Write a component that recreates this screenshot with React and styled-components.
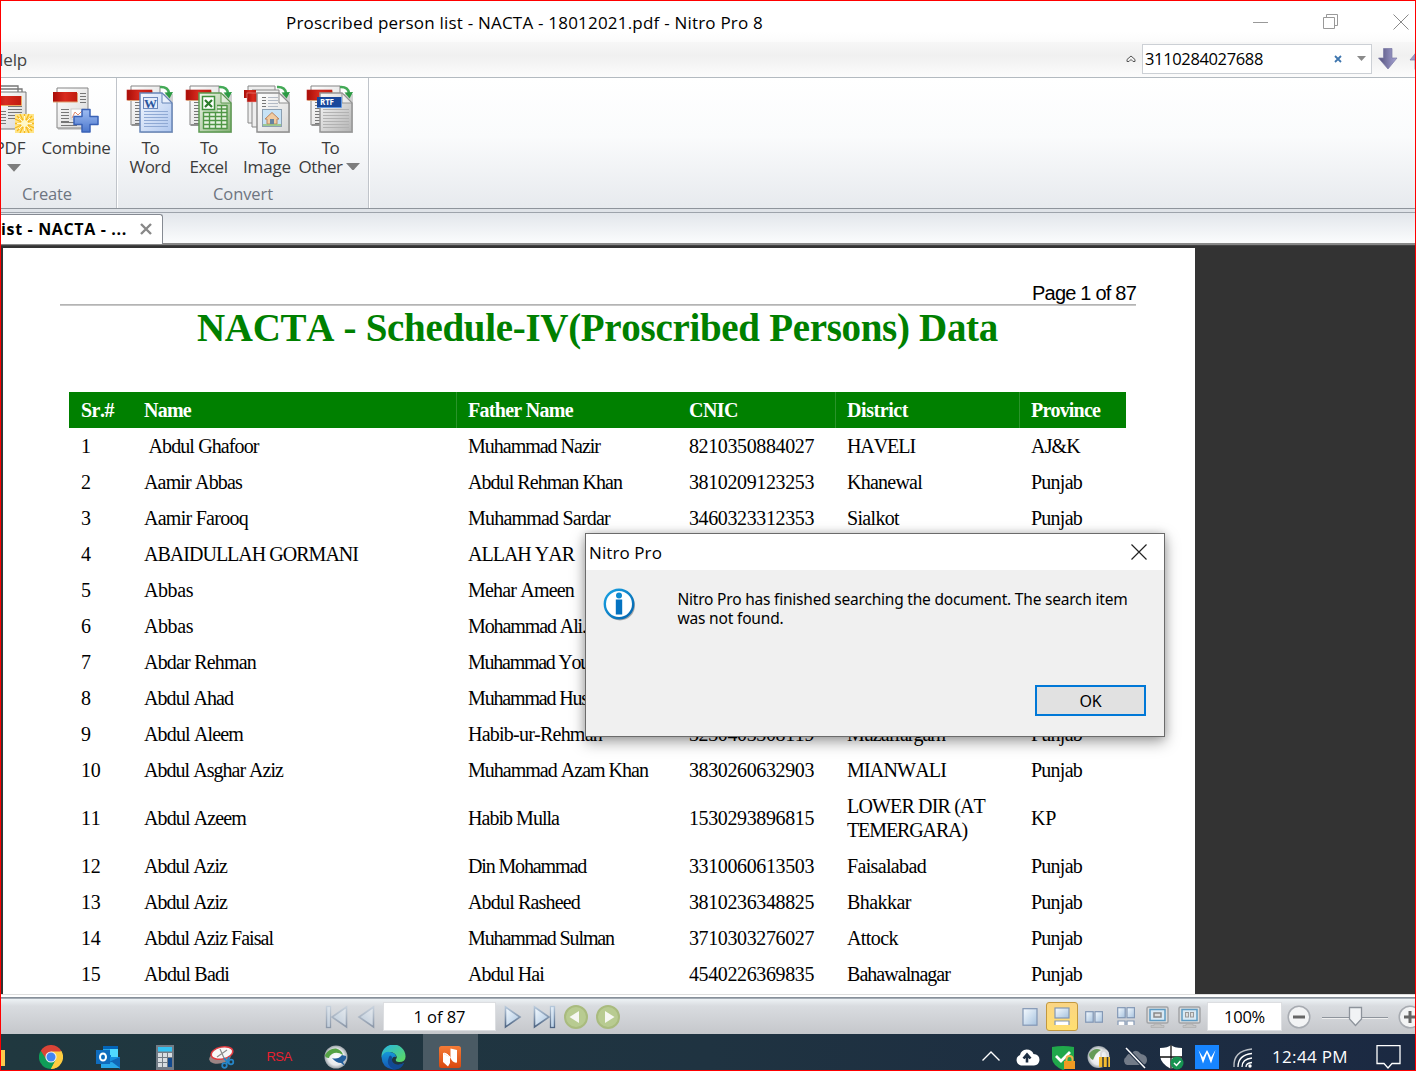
import React, { useLayoutEffect, useRef } from 'react';
import styled, { createGlobalStyle, css } from 'styled-components';

const Global = createGlobalStyle`
  * { box-sizing: border-box; }
  body { margin: 0; overflow: hidden; background: #fff; }
`;
const ui = css`font-family: "Open Sans", "Noto Sans", sans-serif;`;

const FitText = styled.span`
  display: inline-block;
  white-space: pre;
  flex: none;
`;
/* Tunes the tracking so that a line of text takes exactly w pixels. */
function Fit({ w, children, className }) {
  const ref = useRef(null);
  useLayoutEffect(() => {
    const el = ref.current;
    el.style.letterSpacing = '0px';
    const natural = el.getBoundingClientRect().width;
    el.style.letterSpacing = `${(w - natural) / String(children).length}px`;
  }, [w, children]);
  return <FitText ref={ref} className={className}>{children}</FitText>;
}

const Frame = styled.div`
  width: 1416px; height: 1071px;
  border: 1px solid #f00;
  display: flex; flex-direction: column;
  overflow: hidden;
  position: relative;
  color: #000;
  ${ui}
`;

/* ---------- title and menu ---------- */
const TitleBar = styled.header`
  height: 41px; flex: none; padding-top: 1px;
  display: flex; align-items: center; justify-content: space-between;
  padding-left: 285px; font-size: 17px;
  background: linear-gradient(#fff 75%, #fbfbfb);
`;
const WindowButtons = styled.div`display: flex; gap: 54px; margin-right: 6px; svg { display: block; }`;
const MenuBar = styled.div`
  height: 36px; flex: none;
  display: flex; align-items: center; justify-content: space-between;
  background: linear-gradient(#f7f7f7, #f0f0f0 40%, #fcfcfc);
  border-bottom: 1px solid #b3bac0;
`;
const MenuItem = styled.div`margin-left: -10px; font-size: 17px; color: #444; line-height: 34px; padding-top: 1px;`;
const SearchArea = styled.div`display: flex; align-items: center; margin-right: -14px; padding-bottom: 2px;`;
const SearchBox = styled.div`
  width: 230px; height: 30px; margin: 0 6px 0 6px; padding: 0 5px 0 2px;
  border: 1px solid #ccd0d5; background: #fff;
  display: flex; align-items: center; font-size: 16.5px;
`;
const Grow = styled.div`flex: ${p => (p.$w ? `0 0 ${p.$w}px` : 1)}; overflow: hidden;`;

/* ---------- ribbon ---------- */
const Ribbon = styled.div`
  height: 131px; flex: none; display: flex;
  background: linear-gradient(#fff, #fafbfc 45%, #e7eaee);
  border-bottom: 1px solid #8e949b;
`;
const RibbonGroup = styled.section`
  width: ${p => p.$w}px; padding-top: 7px;
  display: flex; flex-direction: column;
  border-right: 1px solid #c0c4ca; box-shadow: 1px 0 #fff;
  overflow: hidden;
`;
const Tools = styled.div`display: flex; height: 98px; margin-left: ${p => p.$shift}px;`;
const Tool = styled.div`
  width: ${p => p.$w}px; margin-right: ${p => p.$gap || 0}px; flex: none;
  display: flex; flex-direction: column; align-items: center;
  font-size: 17px; line-height: 19px; color: #3b3b3b;
  svg.pic { display: block; margin-bottom: 5px; flex: none; }
`;
const LabelLine = styled.div`display: flex; align-items: center; height: 19px; gap: 3px; margin-left: ${p => p.$x || 0}px; padding-top: ${p => p.$y || 0}px;`;
const GroupLabel = styled.div`
  font-size: 16.5px; color: #6e7580; line-height: 22px;
  padding-left: ${p => p.$x}px;
`;

/* ---------- tabs ---------- */
const TabStrip = styled.div`
  height: 36px; flex: none; padding-top: 4px;
  background: linear-gradient(#dfe3e8 0 3px, #9da3ab 3px 4px, #e2e6eb 4px, #fbfcfd 34px, #888 34px);
`;
const DocTab = styled.div`
  width: 162px; height: 30px; padding: 0 9px 0 0; margin-top: 1px;
  background: #fff; border: 1px solid #858a92; border-left: 0; border-bottom: 0;
  border-radius: 0 3px 0 0;
  display: flex; align-items: center; justify-content: space-between;
  font-weight: 700; font-size: 16px;
  span { margin-top: -2px; } svg { margin-top: -1px; }
`;

/* ---------- document ---------- */
const Viewer = styled.main`
  height: 749px; flex: none; background: #333; padding: 2px 0 0 2px;
  border-top: 1px solid #444;
  overflow: hidden;
`;
const Page = styled.article`
  width: 1192px; height: 746px; background: #fff; overflow: hidden;
  font-family: "Liberation Serif", "Times New Roman", serif;
  font-kerning: none;
`;
const PageHead = styled.div`
  height: 57px; margin: 0 59px 0 57px; border-bottom: 1px solid #b4b4b4; box-shadow: 0 1px #c8c8c8;
  display: flex; justify-content: flex-end; align-items: flex-end;
  font: 20px/21px "Liberation Sans", Arial, sans-serif;
`;
const DocTitle = styled.h1`
  margin: 0 0 0 194px; height: 87px;
  font-size: 39px; line-height: 46px; color: #008000;
`;
const Table = styled.div`margin-left: 66px; width: 1057px; font-size: 20px;`;
const Row = styled.div`
  display: grid; grid-template-columns: 63px 324px 221px 158px 184px 107px;
  height: ${p => (p.$tall ? 60 : 36)}px; align-items: center;
  ${p => p.$head && css`background: #008000; color: #fff; font-weight: 700;`}
`;
const Cell = styled.div`
  padding-left: 12px; line-height: 24px; height: ${p => (p.$full ? '36px' : 'auto')};
  ${p => p.$full && css`line-height: 36px;`}
  ${p => p.$rule && css`border-left: 1px solid #2a932a; padding-left: 11px;`}
  ${p => p.$indent && css`padding-left: 16.5px;`}
  white-space: nowrap;
  span { display: block; width: max-content; }
`;

/* ---------- status bar ---------- */
const StatusBar = styled.footer`
  height: 40px; flex: none; padding-top: 5px;
  background: linear-gradient(#dedede 0 1px, #fff 1px 3px, #868f99 3px 4px, #a4acb5 4px 5px, #edf2f5 5px, #d9dce0 12px, #c5c7cb);
  display: flex; align-items: center;
  svg { display: block; flex: none; }
`;
const StatusField = styled.div`
  width: ${p => p.$w}px; height: 29px; background: #fff; border: 1px solid #dcdee1;
  display: flex; align-items: center; justify-content: center; font-size: 16.5px;
  margin: 0 ${p => p.$r}px 0 ${p => p.$l}px;
`;
const ViewMode = styled.div`
  width: 32px; height: 29px; display: flex; align-items: center; justify-content: center;
  ${p => p.$on && css`background: linear-gradient(#fbd584, #ffdf70); border: 1px solid #c2983e; border-radius: 3px;`}
`;
const Slider = styled.svg`margin: 0 10px 0 11px;`;

/* ---------- task bar ---------- */
const TaskBar = styled.nav`
  height: 36px; flex: none; display: flex; padding-top: 11px;
  background: linear-gradient(90deg, #20383f, #1f3341 50%, #1b2942);
  color: #fff; overflow: hidden;
  svg { display: block; flex: none; }
`;
const Folder = styled.div`width: 4px; height: 16px; margin: 5px 17.5px 0 0; background: #ffca4b;`;
const App57 = styled.div`
  width: 57px; height: 26px; display: flex; justify-content: center; align-items: flex-start;
  ${p => p.$on && css`background: #4a5a64; margin-top: -11px; padding-top: 11px; height: 36px; width: 55px; margin-left: 1px;`}
`;
const Rsa = styled.div`color: #e8202f; font: 13px/24px "Liberation Sans", Arial, sans-serif;`;
const Tray = styled.div`display: flex; margin-left: auto; padding-right: 14px;`;
const TrayCell = styled.div`width: 36px; display: flex; justify-content: center;`;
const Clock = styled.div`width: 77px; margin: 0 27px 0 11px; font-size: 17px; line-height: 24px;`;

/* ---------- dialog ---------- */
const Dialog = styled.div`
  position: absolute; left: 584px; top: 532px; width: 580px; height: 204px;
  border: 1px solid #6b6b6b; background: #f0f0f0;
  box-shadow: 0 5px 14px rgba(0,0,0,.36), 0 0 8px rgba(0,0,0,.16);
  display: flex; flex-direction: column;
`;
const DialogTitle = styled.div`
  height: 36px; background: #fff; padding: 0 17px 0 3px;
  display: flex; align-items: center; justify-content: space-between; font-size: 17px;
`;
const DialogBody = styled.div`display: flex; padding: 18px 0 0 17px; height: 115px;`;
const Message = styled.div`
  margin: 2px 0 0 40.500px; font: 15.5px/19px "Noto Sans", "Open Sans", sans-serif;
  display: flex; flex-direction: column; align-items: flex-start;
`;
const OkButton = styled.button`
  width: 111px; height: 31px; margin: 0 18px 0 auto; padding: 0;
  border: 2px solid #0078d7; background: #e1e1e1; color: #000;
  font: 16px "Noto Sans", sans-serif;
`;

/* ---------- drawings ---------- */
const Lines = ({ x, y, w, n, c = '#777', step = 3, h = 1 }) =>
  Array.from({ length: n }, (_, i) => <rect key={i} x={x} y={y + i * step} width={w} height={h} fill={c} />);

const DefsSvg = styled.svg`position: absolute;`;
const Defs = () => (
  <DefsSvg width="0" height="0">
    <defs>
      <linearGradient id="red" x2="1"><stop stopColor="#a80d08" /><stop offset=".5" stopColor="#d92a1e" /><stop offset="1" stopColor="#c01c10" /></linearGradient>
      <linearGradient id="paper" x2="1" y2="1"><stop stopColor="#fff" /><stop offset="1" stopColor="#d8d8d8" /></linearGradient>
      <linearGradient id="bluePaper" x2="1" y2="1"><stop stopColor="#f5f9ff" /><stop offset="1" stopColor="#aec6ee" /></linearGradient>
      <linearGradient id="greenPaper" x2="1" y2="1"><stop stopColor="#f2f8ec" /><stop offset="1" stopColor="#86b078" /></linearGradient>
      <linearGradient id="greyPaper" x2="1" y2="1"><stop stopColor="#fafafa" /><stop offset="1" stopColor="#b4b4b4" /></linearGradient>
      <linearGradient id="plus" x2="0" y2="1"><stop stopColor="#9fbdf3" /><stop offset="1" stopColor="#4c77cc" /></linearGradient>
      <linearGradient id="glass" x2="1" y2="1"><stop stopColor="#f6fbff" /><stop offset="1" stopColor="#a6c2de" /></linearGradient>
      <linearGradient id="edge" x2="0" y2="1"><stop stopColor="#b5c7da" /><stop offset="1" stopColor="#4f6583" /></linearGradient>
      <linearGradient id="arrow" x2="1"><stop stopColor="#55537d" /><stop offset="1" stopColor="#a7a4d5" /></linearGradient>
      <linearGradient id="info" x2="1" y2="1"><stop stopColor="#19a3e4" /><stop offset="1" stopColor="#0463ad" /></linearGradient>
      <linearGradient id="edgeA" x2="1" y2="1"><stop stopColor="#26b4e8" /><stop offset="1" stopColor="#5fdc58" /></linearGradient>
      <linearGradient id="edgeB" x2="0" y2="1"><stop stopColor="#1598d8" /><stop offset="1" stopColor="#1554b3" /></linearGradient>
      <radialGradient id="ball"><stop stopColor="#fff" /><stop offset=".7" stopColor="#e8eaec" /><stop offset="1" stopColor="#9ca4aa" /></radialGradient>
      <linearGradient id="nitro" x2="0" y2="1"><stop stopColor="#f47b36" /><stop offset="1" stopColor="#d9480f" /></linearGradient>
    </defs>
  </DefsSvg>
);

const PdfSheet = () => (
  <g>
    <path d="M5 1H34V40H5Z" fill="url(#paper)" stroke="#858585" />
    <rect x="6" y="39" width="30" height="2" fill="#777" opacity=".6" />
    <Lines x={9} y={17} w={8} n={8} />
    <rect x="1" y="5" width="25" height="10" fill="url(#red)" stroke="#b92018" strokeWidth=".6" />
    <path d="M1.500 15.500H26.500V6" fill="none" stroke="#dca27c" />
  </g>
);
const ConvertArrow = () => (
  <g><path d="M34 2Q42 1.500 43 8" fill="none" stroke="#43a956" strokeWidth="2.600" /><path d="M38.500 7.500L47 7L43.500 13.500Z" fill="#2b9a43" /></g>
);
const FrontSheet = ({ fill, stroke }) => (
  <g>
    <rect x="15" y="9" width="32" height="39" fill="#000" opacity=".18" />
    <path d="M14 8H36L46 18V47H14Z" fill={`url(#${fill})`} stroke={stroke} strokeWidth="1.500" />
    <path d="M36 8V18H46Z" fill="#fff" fillOpacity=".5" stroke={stroke} />
  </g>
);
const Pic = ({ children }) => <svg className="pic" width="48" height="48" viewBox="0 0 48 48">{children}</svg>;

const PdfPic = () => (
  <Pic>
    <path d="M4 1H32V32M8 4H36V36" fill="none" stroke="#777" strokeWidth="1.300" />
    <path d="M6 7H40V44H6Z" fill="url(#paper)" stroke="#777" />
    <Lines x={22} y={12} w={14} n={8} /><Lines x={14} y={26} w={6} n={5} />
    <rect x="4" y="11" width="31" height="9" fill="url(#red)" /><path d="M4 20.500H35.500V11" fill="none" stroke="#eaa85e" />
    <rect x="29" y="29" width="19" height="19" fill="#ffe58a" />
    <path d="M38.500 29V48M29 38.500H48M31 31L46 46M46 31L31 46M34 29L43 48M43 29L34 48M29 34L48 43M48 34L29 43" stroke="#f6b91c" strokeWidth="1.300" />
    <path d="M38.500 31V46M31 38.500H46M33 33L44 44M44 33L33 44" stroke="#fffbe0" strokeWidth="1" />
    <circle cx="38.500" cy="38.500" r="3.500" fill="#fff9c8" />
  </Pic>
);
const CombinePic = () => (
  <Pic>
    <path d="M5 3H36V43H5Z" fill="url(#paper)" stroke="#858585" />
    <path d="M6 44H36" stroke="#777" opacity=".6" />
    <Lines x={9} y={24} w={8} n={5} /><Lines x={9} y={37} w={16} n={2} /><Lines x={28} y={8} w={6} n={4} />
    <rect x="19" y="24" width="14" height="10" fill="#fff" stroke="#ccc" /><path d="M20 33L23 27L26 30L30 26" fill="none" stroke="#e28b6f" />
    <rect x="1" y="7" width="24" height="10" fill="url(#red)" /><path d="M1 17H25.500V8" fill="none" stroke="#e0a273" />
    <path d="M30 24.500H38V31.500H46V39.500H38V47H30V39.500H22V31.500H30Z" fill="url(#plus)" stroke="#3a62b6" strokeWidth="1.500" strokeLinejoin="round" />
  </Pic>
);
const SmallText = styled.text`font: 700 ${p => p.$s}px "Liberation Serif", serif;`;
const SansText = styled.text`font: 700 ${p => p.$s}px "Open Sans", sans-serif;`;
const WordPic = () => (
  <Pic>
    <PdfSheet /><FrontSheet fill="bluePaper" stroke="#6785b8" />
    <Lines x={18} y={26} w={24} n={6} c="#8fa9d4" />
    <rect x="17.500" y="12.500" width="14" height="11" fill="#e5edfa" stroke="#6c88bb" />
    <SmallText $s={13} x="18" y="22.500" fill="#2b569f">W</SmallText><ConvertArrow />
  </Pic>
);
const ExcelPic = () => (
  <Pic>
    <PdfSheet /><FrontSheet fill="greenPaper" stroke="#5c9a50" />
    <rect x="18" y="27" width="24" height="16" fill="#e8f3e2" /><rect x="33" y="20" width="9" height="8" fill="#e8f3e2" />
    <path d="M18 27.500H42M18 31.500H42M18 35.500H42M18 39.500H42M18 43.500H42M18.500 27V44M24.500 27V44M30.500 27V44M36.500 20V44M42 20V44M32 20.500H42M32 24H42" stroke="#4f9645" strokeWidth="1.400" />
    <rect x="17.500" y="11.500" width="12" height="13" fill="#fff" stroke="#3e913b" strokeWidth="1.500" />
    <path d="M20 15L27 22M27 15L20 22" stroke="#2c7b2b" strokeWidth="2.200" /><ConvertArrow />
  </Pic>
);
const ImagePic = () => (
  <Pic>
    <path d="M5 1H32V38H5Z" fill="#eee" stroke="#888" /><path d="M9 5H36V42H9Z" fill="#eee" stroke="#888" />
    <rect x="1" y="5" width="12" height="8" fill="url(#red)" /><rect x="4" y="8" width="12" height="9" fill="url(#red)" stroke="#eaa" strokeWidth=".5" />
    <FrontSheet fill="paper" stroke="#909090" />
    <Lines x={19} y={12} w={4} n={4} /><Lines x={25} y={12} w={10} n={4} c="#b3bac5" />
    <rect x="19.500" y="24.500" width="19" height="17" fill="#c6e2f6" stroke="#8b9fb2" />
    <path d="M22 34L29 27.500L36 34H34V39H24V34Z" fill="#f1cba0" stroke="#b98560" /><rect x="27" y="34" width="4" height="5" fill="#6683a0" />
    <path d="M20 40H38" stroke="#8fbf70" strokeWidth="1.500" /><ConvertArrow />
  </Pic>
);
const OtherPic = () => (
  <Pic>
    <PdfSheet /><FrontSheet fill="greyPaper" stroke="#959595" />
    <Lines x={17} y={24} w={26} n={7} c="#b2b2b2" />
    <rect x="11" y="12" width="24" height="10" fill="#17479b" /><path d="M11 22.500H35.500V12" fill="none" stroke="#6299e3" />
    <SansText $s={8} x="14" y="20" fill="#fff" textLength="14">RTF</SansText><ConvertArrow />
  </Pic>
);
const Drop = ({ w = 14, c = '#7d7d7d' }) => <svg width={w} height={w * 0.55} viewBox="0 0 14 8" preserveAspectRatio="none"><path d="M0 0H14L7 8Z" fill={c} /></svg>;

const SearchArrow = ({ up }) => (
  <svg width="20" height="22" viewBox="0 0 20 22"><path transform={up ? 'rotate(180 10 11)' : undefined} d="M5.500 .5H14V10H19L10 21L.5 10H5.500Z" fill="url(#arrow)" stroke="#7a78a4" strokeWidth=".7" /></svg>
);
const ClearMark = styled.svg`margin-right: 15px;`;

const Step = ({ bar, flip, w, dim }) => (
  <svg width={w} height="24" viewBox={`0 0 ${w} 24`} opacity={dim ? 0.5 : 1}>
    <g transform={flip ? `translate(${w} 0) scale(-1 1)` : undefined}>
      <path d="M1.500 2L16 12L1.500 22Z" fill="url(#glass)" stroke="url(#edge)" strokeWidth="1.600" />
      {bar && <rect x="17.500" y="1.500" width="4" height="21" fill="url(#glass)" stroke="url(#edge)" strokeWidth="1.300" />}
    </g>
  </svg>
);
const RoundStep = ({ flip }) => (
  <svg width="24" height="24" viewBox="0 0 24 24">
    <circle cx="12" cy="12" r="11" fill="#b8cb91" stroke="#a9bb7e" strokeWidth="2" />
    <path transform={flip ? 'translate(24 0) scale(-1 1)' : undefined} d="M9 6L18.500 12L9 18Z" fill="#f6f7f2" />
  </svg>
);
const MiniPage = ({ x, y, w, h }) => <rect x={x} y={y} width={w} height={h} fill="url(#glass)" stroke="#8297b4" strokeWidth="1.200" />;
const Monitor = ({ two }) => (
  <svg width="24" height="24" viewBox="0 0 24 24">
    <rect x="1" y="2" width="21" height="16" rx="1.500" fill="#ddd" stroke="#a2a4a7" strokeWidth="1.500" />
    <rect x="4" y="4.500" width="15" height="11" fill="#d9e9f4" stroke="#5e9cc4" strokeWidth="1.500" />
    {two ? <g fill="#ddd" stroke="#999"><rect x="7.500" y="7.500" width="3" height="4.500" /><rect x="12.500" y="7.500" width="3" height="4.500" /></g>
      : <rect x="8" y="8" width="7" height="4" fill="#ddd" stroke="#888" strokeWidth="1.500" />}
    <path d="M8 19H15V20.500H18V22.500H5V20.500H8Z" fill="#c4c4c4" stroke="#a8a8a8" strokeWidth=".6" />
  </svg>
);
const ZoomKnob = ({ plus }) => (
  <svg width="24" height="24" viewBox="0 0 24 24">
    <circle cx="12" cy="12" r="10.800" fill="#f3f4f5" stroke="#a7abb1" strokeWidth="1.500" />
    <path d={plus ? 'M6 12H18M12 6V18' : 'M6 12H18'} stroke="#666" strokeWidth="3" />
  </svg>
);

const Chrome = () => (
  <svg width="24" height="24" viewBox="0 0 24 24">
    <path d="M12 12L1.600 6A12 12 0 0 1 22.400 6Z" fill="#db4437" /><path d="M12 12L22.400 6A12 12 0 0 1 12 24Z" fill="#ffcd40" /><path d="M12 12V24A12 12 0 0 1 1.600 6Z" fill="#0f9d58" />
    <path d="M12 6.500H22.500L17 15Z" fill="#ffcd40" /><path d="M12 6.500A5.500 5.500 0 0 0 7 14L2 6Z" fill="#db4437" /><path d="M7 14.500L12 24L17 14.500Z" fill="#0f9d58" /><path d="M17 14.500L12 24Q20 23 22 17Z" fill="#ffcd40" />
    <circle cx="12" cy="12" r="5.600" fill="#f1f1f1" /><circle cx="12" cy="12" r="4.500" fill="#4285f4" />
  </svg>
);
const Outlook = () => (
  <svg width="26" height="25" viewBox="0 0 26 25">
    <rect x="8" y="1" width="15" height="17" fill="#28a8ea" /><rect x="8" y="1" width="15" height="3" fill="#0364b8" /><rect x="15" y="4" width="8" height="8" fill="#50d9ff" /><rect x="8" y="10" width="8" height="8" fill="#0078d4" />
    <path d="M6 12L25 12V23H6Z" fill="#1490df" /><path d="M25 12V24L14 17Z" fill="#1066b5" /><path d="M6 19L17 17L25 23H6Z" fill="#28a8ea" />
    <rect x="1" y="5" width="14" height="14" fill="#0f6cbd" /><ellipse cx="8" cy="12" rx="3" ry="3.500" fill="none" stroke="#fff" strokeWidth="2" />
  </svg>
);
const Calculator = () => (
  <svg width="18" height="25" viewBox="0 0 18 25">
    <rect width="18" height="25" fill="#727c86" /><rect x="2" y="2" width="14" height="4.500" fill="#35c1f1" />
    {[8, 13, 18].map(y => [2, 7, 12].map(x => <rect key={`${x}-${y}`} x={x} y={y} width="4" height="4" fill="#d8dde1" />))}
    <rect x="12" y="13" width="4" height="9" fill="#124a8f" />
  </svg>
);
const Snip = () => (
  <svg width="26" height="25" viewBox="0 0 26 25">
    <ellipse cx="11" cy="12.500" rx="11" ry="6" transform="rotate(-12 11 12.500)" fill="#9c8585" />
    <ellipse cx="13" cy="8" rx="11" ry="6" transform="rotate(-12 13 8)" fill="#f8f8f8" stroke="#e23b40" strokeWidth="1.500" />
    <path d="M8 12L18 5M11 4L15 13" stroke="#8b8b8b" strokeWidth="1.200" /><path d="M15 13L20 19M20 12L17 19" stroke="#2686c8" strokeWidth="1.800" />
    <circle cx="15.500" cy="20.500" r="2.300" fill="none" stroke="#2686c8" strokeWidth="1.700" /><circle cx="22" cy="17" r="2.300" fill="none" stroke="#2686c8" strokeWidth="1.700" />
  </svg>
);
const Globe = () => (
  <svg width="24" height="24" viewBox="0 0 24 24">
    <circle cx="12" cy="12" r="11.500" fill="url(#ball)" />
    <path d="M1 10Q5 3 12 3.500Q18 5 19 10Q13 6 8 9Q5 11 5 13Q1 13 1 10Z" fill="#55a245" /><path d="M8 13Q14 15 18 10L22 11Q23 14 19 17L21 21L17 18Q12 18 8 13Z" fill="#235f9c" />
  </svg>
);
const EdgeLogo = () => (
  <svg width="25" height="25" viewBox="0 0 25 25">
    <path d="M.5 12A12 12 0 0 1 24.500 11Q25 17 18 17Q14 17 15 14Q17 12 14 9Q8 4 .5 12Z" fill="url(#edgeA)" />
    <path d="M.5 12Q3 6 9 7Q15 8 15 12Q12 11 11 14Q10 20 17 20Q20 20 23 18Q19 25 12 24.500Q1 23 .5 12Z" fill="url(#edgeB)" />
    <path d="M8 12Q4 20 13 24.500Q20 25 23 18Q18 21 14 19Q10 17 11 12Q9 9 8 12Z" fill="#124a94" />
  </svg>
);
const NitroLogo = () => (
  <svg width="22" height="24" viewBox="0 0 22 24">
    <rect y="1" width="22" height="22" rx="2.500" fill="url(#nitro)" />
    <path d="M4 8.500L11 12V18L9 21.500L4 17Z" fill="#fff" /><path d="M11.500 3.500L18 5V17.500Q14 18.500 11.500 13Z" fill="#fff" /><path d="M4 8.500Q7 7 11.500 12.500" stroke="#fff" fill="#fff" />
  </svg>
);
const Chevron = () => <svg width="20" height="25" viewBox="0 0 20 25"><path d="M1.500 15.500L10 7L18.500 15.500" fill="none" stroke="#fff" strokeWidth="1.400" /></svg>;
const Cloud = () => (
  <svg width="25" height="25" viewBox="0 0 25 25"><path d="M6 20.500A5.500 5.500 0 0 1 5 10Q6 5 11.500 4.500Q17 4.500 18.500 9Q24.500 9.500 24.500 15Q24 20 19 20.500Z" fill="#fff" /><path d="M12 17.500V11M8.500 13.500L12 9.500L15.500 13.500" fill="none" stroke="#1c2d42" strokeWidth="2.600" /></svg>
);
const Lock = ({ x, y }) => <g transform={`translate(${x} ${y})`}><path d="M2.500 6V4A3 3 0 0 1 8.500 4V6" fill="none" stroke="#f1b04a" strokeWidth="2" /><rect y="6" width="11" height="8" fill="#f19b22" /></g>;
const GreenShield = () => (
  <svg width="25" height="25" viewBox="0 0 25 25"><path d="M1 2Q12 0 23 2V14Q22 21 12 25Q2 21 1 14Z" fill="#20a84b" /><path d="M5 11L10 16L19 7" fill="none" stroke="#fff" strokeWidth="2.800" /><Lock x={13} y={10} /></svg>
);
const LockedGlobe = () => (
  <svg width="25" height="25" viewBox="0 0 25 25"><circle cx="11.500" cy="12" r="11" fill="url(#ball)" /><path d="M2 9Q7 2 14 5Q9 7 6 15Q2 13 2 9Z" fill="#659b58" /><path d="M14 12V9A3.500 3.500 0 0 1 21 9V12" fill="none" stroke="#dadada" strokeWidth="2" /><rect x="12" y="12" width="11" height="10" fill="#f4bc31" /><path d="M16 12V22M20.500 12V22" stroke="#30363b" strokeWidth="1.500" /></svg>
);
const CloudOff = () => (
  <svg width="26" height="25" viewBox="0 0 26 25"><path d="M5 20A4.500 4.500 0 0 1 4 12Q6 8 10 8Q14 3 19 9Q25 10 25 15Q25 19 21 20Z" fill="#727b88" /><path d="M4 3L23 23" stroke="#1c2b42" strokeWidth="3.500" /><path d="M4 3L23 23" stroke="#fff" strokeWidth="1.500" /></svg>
);
const Defender = () => (
  <svg width="25" height="25" viewBox="0 0 25 25"><path d="M12 0Q15 3 23 3V11Q22 19 12 24Q2 19 1 11V3Q9 3 12 0Z" fill="#fff" /><path d="M12 0V24M1 12H23" stroke="#111" strokeWidth="1.300" /><circle cx="18" cy="18" r="6.500" fill="#169451" /><path d="M15 18L17.500 20.500L21.500 16" fill="none" stroke="#fff" strokeWidth="1.500" /></svg>
);
const WApp = () => (
  <svg width="24" height="24" viewBox="0 0 24 24"><rect width="24" height="24" fill="#1785ff" /><path d="M3.500 5L8 18.500L12 8L16 18.500L20.500 5L16 12.500L12 5L8 12.500Z" fill="#fff" /></svg>
);
const Wifi = () => (
  <svg width="22" height="25" viewBox="0 0 22 25" fill="none" stroke="#fff" strokeWidth="1.300"><path d="M2 22Q1 6 20 4" opacity=".7" /><path d="M6 22Q6 10 20 8.500" /><path d="M10 22Q10 14 20 13" /><path d="M14 22Q14 18 20 17.500" /><circle cx="18" cy="21" r="1.700" fill="#fff" stroke="none" /></svg>
);
const Notice = () => <svg width="25" height="25" viewBox="0 0 25 25"><path d="M1 .7H24V18.500H16L12 23L8 18.500H1Z" fill="none" stroke="#fff" strokeWidth="1.300" /></svg>;

/* ---------- data ---------- */
const people = [
  ['1', 'Abdul Ghafoor', 110, 'Muhammad Nazir', 132, '8210350884027', ['HAVELI', 68], 'AJ&K'],
  ['2', 'Aamir Abbas', 98, 'Abdul Rehman Khan', 154, '3810209123253', ['Khanewal', 75], 'Punjab'],
  ['3', 'Aamir Farooq', 104, 'Muhammad Sardar', 142, '3460323312353', ['Sialkot', 52], 'Punjab'],
  ['4', 'ABAIDULLAH GORMANI', 214, 'ALLAH YAR', 106, '', ['', 0], ''],
  ['5', 'Abbas', 49, 'Mehar Ameen', 106, '', ['', 0], ''],
  ['6', 'Abbas', 49, 'Mohammad Ali.', 118, '', ['', 0], ''],
  ['7', 'Abdar Rehman', 112, 'Muhammad You', 121, '', ['', 0], ''],
  ['8', 'Abdul Ahad', 89, 'Muhammad Hus', 120, '', ['', 0], ''],
  ['9', 'Abdul Aleem', 99, 'Habib-ur-Rehman', 134, '3230403308119', ['Muzaffargarh', 98], 'Punjab'],
  ['10', 'Abdul Asghar Aziz', 139, 'Muhammad Azam Khan', 180, '3830260632903', ['MIANWALI', 99], 'Punjab'],
  ['11', 'Abdul Azeem', 102, 'Habib Mulla', 91, '1530293896815', ['LOWER DIR (AT', 138, 'TEMERGARA)', 120], 'KP'],
  ['12', 'Abdul Aziz', 83, 'Din Mohammad', 118, '3310060613503', ['Faisalabad', 79], 'Punjab'],
  ['13', 'Abdul Aziz', 83, 'Abdul Rasheed', 112, '3810236348825', ['Bhakkar', 64], 'Punjab'],
  ['14', 'Abdul Aziz Faisal', 129, 'Muhammad Sulman', 146, '3710303276027', ['Attock', 51], 'Punjab'],
  ['15', 'Abdul Badi', 85, 'Abdul Hai', 76, '4540226369835', ['Bahawalnagar', 103], 'Punjab'],
];
const headings = [['Sr.#', 33], ['Name', 47], ['Father Name', 105], ['CNIC', 49], ['District', 61], ['Province', 69]];
const provinceWidth = { 'AJ&K': 49, Punjab: 51, KP: 25 };
const tool = (label, w, x) => <LabelLine $x={x}><Fit w={w}>{label}</Fit></LabelLine>;

export default function App() {
  return (
    <Frame>
      <Global />
      <Defs />
      <TitleBar>
        <Fit w={477}>Proscribed person list - NACTA - 18012021.pdf - Nitro Pro 8</Fit>
        <WindowButtons>
          <svg width="16" height="16"><path d="M0 8.500H15" stroke="#999" /></svg>
          <svg width="16" height="16" fill="none" stroke="#999"><path d="M.5 3.500H11.500V14.500H.5ZM3.500 3.500V.5H14.500V11.500H11.500" /></svg>
          <svg width="16" height="16"><path d="M.5 .5L15.500 15.500M15.500 .5L.5 15.500" stroke="#8a8a8a" /></svg>
        </WindowButtons>
      </TitleBar>
      <MenuBar>
        <MenuItem><Fit w={36}>Help</Fit></MenuItem>
        <SearchArea>
          <svg width="10" height="8" fill="none" stroke="#555" strokeWidth="1"><path d="M1 4.500L5 1L9 4.500V6.500H7L5 4.500L3 6.500H1Z" /></svg>
          <SearchBox>
            <Fit w={118}>3110284027688</Fit><Grow />
            <ClearMark width="8" height="8"><path d="M1 1L7 7M7 1L1 7" stroke="#3f76ae" strokeWidth="1.800" /></ClearMark>
            <Drop w={9} c="#8a8a8a" />
          </SearchBox>
          <SearchArrow /><Grow $w={11} /><SearchArrow up />
        </SearchArea>
      </MenuBar>

      <Ribbon>
        <RibbonGroup $w={116}>
          <Tools $shift={-15}>
            <Tool $w={48} $gap={7}><PdfPic />{tool('PDF', 31)}<LabelLine $x={7} $y={3}><Drop /></LabelLine></Tool>
            <Tool $w={70}><CombinePic />{tool('Combine', 69)}</Tool>
          </Tools>
          <GroupLabel $x={21}><Fit w={50}>Create</Fit></GroupLabel>
        </RibbonGroup>
        <RibbonGroup $w={252}>
          <Tools $shift={4}>
            <Tool $w={58}><WordPic />{tool('To', 17)}{tool('Word', 41)}</Tool>
            <Tool $w={59}><ExcelPic />{tool('To', 17)}{tool('Excel', 38)}</Tool>
            <Tool $w={58}><ImagePic />{tool('To', 17)}{tool('Image', 48)}</Tool>
            <Tool $w={68}><OtherPic />{tool('To', 17)}<LabelLine $x={-2}><Fit w={44}>Other</Fit><Drop /></LabelLine></Tool>
          </Tools>
          <GroupLabel $x={96}><Fit w={60}>Convert</Fit></GroupLabel>
        </RibbonGroup>
      </Ribbon>

      <TabStrip>
        <DocTab><Fit w={126}>ist - NACTA - ...</Fit><svg width="14" height="12"><path d="M2 1L12 11M12 1L2 11" stroke="#888" strokeWidth="2.400" /></svg></DocTab>
      </TabStrip>

      <Viewer>
        <Page>
          <PageHead><Fit w={104}>Page 1 of 87</Fit></PageHead>
          <DocTitle><Fit w={801}>NACTA - Schedule-IV(Proscribed Persons) Data</Fit></DocTitle>
          <Table>
            <Row $head>{headings.map(([t, w], i) => <Cell key={t} $full $rule={i === 2 || i > 3}><Fit w={w}>{t}</Fit></Cell>)}</Row>
            {people.map(([n, name, nw, father, fw, cnic, d, province]) => (
              <Row key={n} $tall={d.length > 2}>
                <Cell><Fit w={n.length * 9.8}>{n}</Fit></Cell>
                <Cell $indent={n === '1'}><Fit w={nw}>{name}</Fit></Cell>
                <Cell><Fit w={fw}>{father}</Fit></Cell>
                <Cell>{cnic && <Fit w={125}>{cnic}</Fit>}</Cell>
                <Cell>{d[0] && <Fit w={d[1]}>{d[0]}</Fit>}{d[2] && <Fit w={d[3]}>{d[2]}</Fit>}</Cell>
                <Cell>{province && <Fit w={provinceWidth[province]}>{province}</Fit>}</Cell>
              </Row>
            ))}
          </Table>
        </Page>
      </Viewer>

      <StatusBar>
        <Grow $w={324} />
        <Step bar flip w={23} dim /><Grow $w={9} /><Step flip w={18} dim />
        <StatusField $w={113} $l={8} $r={8}><Fit w={52}>1 of 87</Fit></StatusField>
        <Step w={18} /><Grow $w={11} /><Step bar w={23} /><Grow $w={8} />
        <RoundStep flip /><Grow $w={8} /><RoundStep />
        <Grow />
        <ViewMode><svg width="16" height="18"><MiniPage x={1} y={.7} w={14} h={16.500} /></svg></ViewMode>
        <ViewMode $on><svg width="16" height="19"><MiniPage x={1} y={1} w={14} h={10} /><path d="M1 18V14H15V18" fill="#fff" stroke="#8297b4" strokeWidth="1.200" /></svg></ViewMode>
        <ViewMode><svg width="18" height="12"><MiniPage x={.7} y={.7} w={7.500} h={10.500} /><MiniPage x={10} y={.7} w={7.500} h={10.500} /></svg></ViewMode>
        <ViewMode><svg width="18" height="19"><MiniPage x={.7} y={.7} w={7.500} h={10} /><MiniPage x={10} y={.7} w={7.500} h={10} /><path d="M1 18V14H8V18M10 18V14H17V18" fill="#fff" stroke="#8297b4" strokeWidth="1.200" /></svg></ViewMode>
        <ViewMode><Monitor /></ViewMode>
        <ViewMode><Monitor two /></ViewMode>
        <StatusField $w={75} $l={1} $r={5}><Fit w={41}>100%</Fit></StatusField>
        <ZoomKnob />
        <Slider width="66" height="24"><path d="M0 12.500H66" stroke="#8e949c" /><path d="M0 13.500H66" stroke="#eee" /><path d="M27.500 2.500H39.500V14L33.500 20.500L27.500 14Z" fill="#f1f3f5" stroke="#8d939b" strokeWidth="1.300" /></Slider>
        <Grow $w={17}><ZoomKnob plus /></Grow>
      </StatusBar>

      <TaskBar>
        <Folder />
        <App57><Chrome /></App57><App57><Outlook /></App57><App57><Calculator /></App57><App57><Snip /></App57>
        <App57><Rsa><Fit w={25}>RSA</Fit></Rsa></App57>
        <App57><Globe /></App57><App57><EdgeLogo /></App57><App57 $on><NitroLogo /></App57>
        <Tray>
          {[Chevron, Cloud, GreenShield, LockedGlobe, CloudOff, Defender, WApp, Wifi].map((Icon, i) => <TrayCell key={i}><Icon /></TrayCell>)}
          <Clock><Fit w={76}>12:44 PM</Fit></Clock>
          <Notice />
        </Tray>
      </TaskBar>

      <Dialog>
        <DialogTitle><Fit w={73}>Nitro Pro</Fit><svg width="16" height="16"><path d="M.5 .5L15.500 15.500M15.500 .5L.5 15.500" stroke="#222" strokeWidth="1.200" /></svg></DialogTitle>
        <DialogBody>
          <svg width="34" height="34" viewBox="0 0 34 34">
            <circle cx="17" cy="17.500" r="15" fill="#000" opacity=".3" /><circle cx="16" cy="16" r="14.200" fill="#fff" stroke="url(#info)" strokeWidth="2.400" />
            <circle cx="16" cy="7.500" r="3" fill="#0f8ad0" /><rect x="12.800" y="11.500" width="6.400" height="15" fill="#0573c1" />
          </svg>
          <Message><Fit w={450}>Nitro Pro has finished searching the document. The search item</Fit><Fit w={106}>was not found.</Fit></Message>
        </DialogBody>
        <OkButton><Fit w={22}>OK</Fit></OkButton>
      </Dialog>
    </Frame>
  );
}
